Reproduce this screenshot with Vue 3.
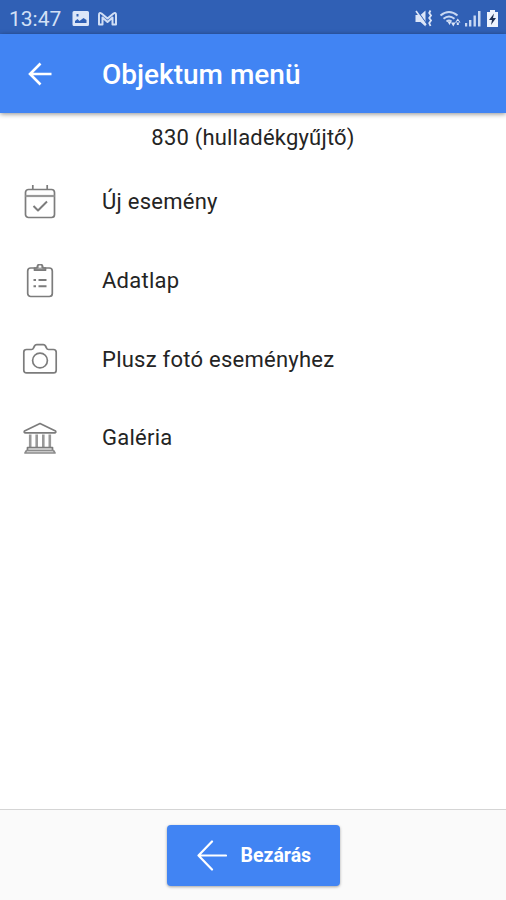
<script setup>
const items = [
  { icon: 'calendar', label: 'Új esemény' },
  { icon: 'clipboard', label: 'Adatlap' },
  { icon: 'camera', label: 'Plusz fotó eseményhez' },
  { icon: 'museum', label: 'Galéria' },
]
</script>

<template>
  <div class="screen">
    <div class="status">
      <span class="clock">13:47</span>
      <svg class="left-icons" width="46" height="20" viewBox="72 9 46 20">
        <path fill="#dce6f8" fill-rule="evenodd" d="M74 11h13.500q1.500 0 1.500 1.500v12q0 1.500-1.500 1.500h-13.500q-1.500 0-1.500-1.500v-12q0-1.500 1.500-1.500zM75 23h11.500v-3l-3-2-4 3-2-2-2.500 2zM76.500 14v2.500h2v-2.500z" />
        <path fill="none" stroke="#d0def5" stroke-width="2" stroke-linejoin="round" d="M99 24.500v-9.500q0-3 2.500-1.500l6 5 6-5q2.500-1.500 2.500 1.500v9.500h-3.500v-7l-5 4.500-5-4.500v7z" />
      </svg>
      <svg class="right-icons" width="88" height="22" viewBox="414 8 88 22">
        <path fill="#dce6f8" d="M415.500 15h5l5-4.500v16l-5-4.500h-5z" />
        <path fill="none" stroke="#3060b5" stroke-width="1.200" d="M417.500 11l8.500 12" />
        <path fill="none" stroke="#dce6f8" stroke-width="1.600" d="M416 11l10 14" />
        <path fill="none" stroke="#dce6f8" stroke-width="1.800" d="M430.500 10.500l-1.300 2.500 1.800 2.500-1.800 2.500 1.800 2.500-1.800 2.500 1.300 3" />
        <path fill="none" stroke="#c8d8f3" stroke-width="2" d="M440.500 15.500q8.500-7 17 0M443.500 18.700q5.500-4.500 11 0M446.500 21.500q2.500-2 5 0" />
        <path fill="#dce6f8" d="M447.500 21.500h4l-2 3.500zM451 22.500h4.500l-2.200 4zM455 22.500h5.500l-2.700-4zM456.800 21h2v4h-2z" />
        <path fill="#c8d8f3" d="M465 23h2.200v3.500h-2.200zM469 20h2.400v6.500h-2.400zM473.500 15.500h2.400v11h-2.400zM478 11h2.500v15.500h-2.500z" />
        <path fill="#edf3fd" d="M490 10h5v2h3v14.500q0 .5-.5.500h-10q-.5 0-.5-.5v-14.500h3z" />
        <path fill="#1d2f52" d="M494 13.500l-5 6.500h3l-1 5 5-7h-3z" />
      </svg>
    </div>

    <header class="bar">
      <svg class="back" width="24" height="24" viewBox="0 0 24 24" fill="none" stroke="#fff" stroke-width="2.600">
        <path d="M23.500 12H2.500M12.500 1.500L2 12l10.500 10.500" />
      </svg>
      <h1 class="title">Objektum menü</h1>
    </header>

    <main class="content">
      <div class="subject">830 (hulladékgyűjtő)</div>
      <ul class="menu">
        <li v-for="item in items" :key="item.icon" class="row">
          <svg class="icon" width="36" height="36" viewBox="0 0 36 36" fill="none" stroke="#7c7c7c" stroke-width="1.700" stroke-linejoin="round">
            <g v-if="item.icon === 'calendar'">
              <rect x="3.500" y="4.500" width="29" height="28" rx="3" />
              <path d="M3.500 11h29" stroke="#999" stroke-width="2.200" />
              <path d="M10.800 0v4.500M25.200 0v4.500" />
              <path stroke-width="2" d="M11.500 21l4.500 4.500 9-9" />
            </g>
            <g v-else-if="item.icon === 'clipboard'">
              <rect x="5.700" y="4" width="24.600" height="28.500" rx="3" />
              <path fill="#a4a4a4" d="M12.500 4h2.500q.5-4 3-4t3 4h2.500v2.200h-11z" />
              <circle cx="18" cy="2.600" r="1.200" fill="#fff" stroke="none" />
              <path stroke-width="2" d="M11.500 16h2.500M16.500 16h8M11.500 22.200h2.500M16.500 22.200h8" />
            </g>
            <g v-else-if="item.icon === 'camera'">
              <path d="M4.500 7.500h5q1.500 0 2-1.500l1-2q.7-1.300 2.200-1.300h6.600q1.500 0 2.200 1.300l1 2q.5 1.500 2 1.500h5q2.700 0 2.700 2.700v18q0 2.700-2.700 2.700h-27q-2.700 0-2.700-2.700v-18q0-2.700 2.700-2.700z" />
              <circle cx="18" cy="18.500" r="7.400" />
            </g>
            <g v-else>
              <path d="M18 2.500L2.500 10q-1 1.800 1 1.800h29q2 0 1-1.800z" />
              <path stroke="#999" stroke-width="2.600" d="M8.200 13.500v13M14.700 13.500v13M21.300 13.500v13M27.800 13.500v13" />
              <path fill="#ddd" d="M5.500 26.500h25v3.500h-25z" />
              <path fill="#ddd" stroke="#8c8c8c" d="M4.500 29.500h27l1.500 2.500h-30z" />
            </g>
          </svg>
          <span class="label">{{ item.label }}</span>
        </li>
      </ul>
    </main>

    <footer class="footer">
      <button class="close">
        <svg width="30" height="32" viewBox="0 0 30 32" fill="none" stroke="#fff" stroke-width="2.200" stroke-linecap="round" stroke-linejoin="round">
          <path d="M29 15.500H1.500M15 1.500L1.500 15.500L15 29.500" />
        </svg>
        <span>Bezárás</span>
      </button>
    </footer>
  </div>
</template>

<style>
body {
  background: #fff;
}
</style>

<style scoped>
.screen {
  display: flex;
  flex-direction: column;
  height: 900px;
  overflow: hidden;
  font-family: Roboto, "Noto Sans", sans-serif;
  color: #242424;
}
.status {
  display: flex;
  align-items: center;
  box-sizing: border-box;
  height: 34px;
  padding: 3px 4px 0 9px;
  background: #3060b5;
}
.clock {
  width: 63px;
  font-size: 21px;
  line-height: 30px;
  color: #d3e0f6;
}
.right-icons {
  margin-left: auto;
}
.bar {
  display: flex;
  align-items: center;
  height: 79px;
  flex: none;
  padding-left: 28px;
  background: #4184f3;
  box-shadow: 0 1px 5px rgba(0, 0, 0, .45);
  z-index: 1;
}
.title {
  margin: 2px 0 0 50px;
  font-size: 28px;
  line-height: 34px;
  font-weight: 500;
  color: #fff;
}
.content {
  flex: 1;
}
.subject {
  margin-top: 9px;
  height: 32px;
  line-height: 32px;
  text-align: center;
  font-size: 22px;
  letter-spacing: .2px;
}
.menu {
  margin: 9px 0 0;
  padding: 0;
  list-style: none;
}
.row {
  display: flex;
  align-items: center;
  height: 78.700px;
  padding-left: 22px;
}
.icon {
  margin-top: 1px;
}
.label {
  margin: -1px 0 0 44px;
  font-size: 22px;
  letter-spacing: .25px;
}
.footer {
  display: flex;
  justify-content: center;
  box-sizing: border-box;
  height: 91px;
  padding-top: 15px;
  border-top: 1px solid #d5d5d5;
  background: #fafafa;
}
.close {
  display: flex;
  align-items: center;
  gap: 14px;
  box-sizing: border-box;
  width: 173px;
  height: 61px;
  padding: 0 0 0 30px;
  border: 0;
  border-radius: 4px;
  background: #4184f3;
  box-shadow: 0 1px 3px rgba(0, 0, 0, .35);
  color: #fff;
  font: 700 19.500px/30px Roboto, sans-serif;
}
</style>
